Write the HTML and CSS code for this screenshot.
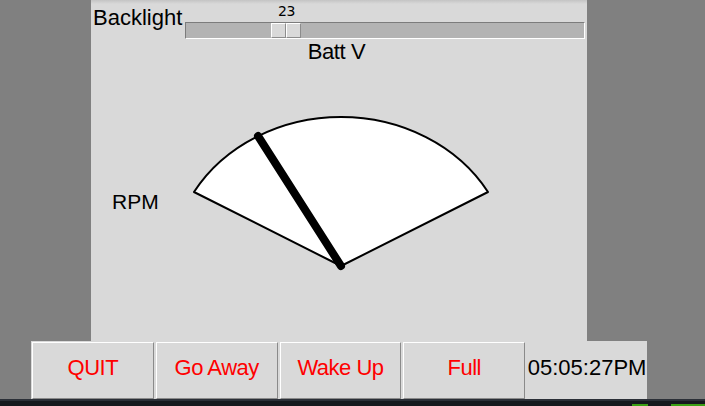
FILE: index.html
```html
<!DOCTYPE html>
<html lang="en">
<head>
  <meta charset="UTF-8" />
  <meta name="viewport" content="width=device-width, initial-scale=1.0" />
  <title>Dash</title>
  <link rel="stylesheet" href="styles.css">
</head>
<body>
  <div class="panel">
    <div class="top-row">
      <div class="backlight-label">Backlight</div>
      <div class="scale">
        <div class="scale-value" style="margin-left: 93px">23</div>
        <div class="trough">
          <div class="handle" style="margin-left: 85px"><span></span><span></span></div>
        </div>
      </div>
    </div>
    <div class="batt-label">Batt V</div>
    <div class="gauge-row">
      <div class="rpm-label">RPM</div>
      <svg class="gauge" width="320" height="170" viewBox="0 0 320 170">
        <path d="M161 156 L14 82 A169.4 149 0 0 1 308 82 Z" fill="#fff" stroke="#000" stroke-width="2" stroke-linejoin="round" />
        <line x1="161" y1="156" x2="78" y2="26" stroke="#000" stroke-width="8" stroke-linecap="round" />
      </svg>
    </div>
  </div>

  <div class="button-bar">
    <button class="btn">QUIT</button>
    <button class="btn">Go Away</button>
    <button class="btn">Wake Up</button>
    <button class="btn">Full</button>
    <div class="clock">05:05:27PM</div>
  </div>

  <div class="taskbar">
    <span class="tb-green small"></span>
    <span class="tb-green large"></span>
  </div>
</body>
</html>
```

FILE: styles.css
```css
body {
  margin: 0;
  padding: 0;
  background-color: #808080;
  font-family: "Liberation Sans", Arial, sans-serif;
  color: #000;
  overflow: hidden;
}
.panel {
  width: 496px;
  height: 341px;
  margin-left: 91px;
  background: linear-gradient(#c4c4c4, #d9d9d9 4px);
}
.top-row {
  display: flex;
  height: 40px;
}
.backlight-label {
  width: 92px;
  margin: 5px 0 0 2px;
  font-size: 22px;
  line-height: 25px;
}
.scale {
  width: 400px;
  padding-top: 4px;
}
.scale-value {
  font-family: "DejaVu Sans", sans-serif;
  font-size: 14px;
  line-height: 15px;
  letter-spacing: -0.3px;
}
.trough {
  display: flex;
  box-sizing: border-box;
  height: 17px;
  margin-top: 3px;
  background-color: #b3b3b3;
  border: 1px solid;
  border-color: #7c7c7c #fff #fff #7c7c7c;
}
.handle {
  display: flex;
}
.handle span {
  box-sizing: border-box;
  width: 15px;
  height: 15px;
  background-color: #d9d9d9;
  border: 1px solid;
  border-color: #fff #8c8c8c #8c8c8c #fff;
}
.batt-label {
  height: 25px;
  padding-right: 5px;
  font-size: 22px;
  line-height: 24px;
  letter-spacing: -0.4px;
  text-align: center;
}
.gauge-row {
  display: flex;
  margin-top: 45px;
}
.rpm-label {
  width: 68px;
  margin: 79px 0 0 21px;
  font-size: 21px;
  line-height: 25px;
}
.gauge {
  display: block;
}
.button-bar {
  display: flex;
  gap: 2px;
  box-sizing: border-box;
  width: 616px;
  height: 58px;
  margin-left: 31px;
  padding: 1px 0 0 1px;
  background-color: #d9d9d9;
}
.btn {
  box-sizing: border-box;
  width: 122px;
  height: 57px;
  padding: 0 0 6px;
  margin: 0;
  background-color: #d9d9d9;
  border: 1px solid;
  border-color: #fff #8a8a8a #8a8a8a #fff;
  color: #ff0000;
  font-family: "Liberation Sans", Arial, sans-serif;
  font-size: 22px;
  line-height: 24px;
  letter-spacing: -0.5px;
}
.clock {
  width: 120px;
  padding-top: 13px;
  font-size: 22px;
  line-height: 25px;
  text-align: center;
}
.taskbar {
  display: flex;
  align-items: flex-end;
  justify-content: flex-end;
  box-sizing: border-box;
  height: 7px;
  background-color: #15181d;
  border-top: 2px solid #2b2f37;
}
.tb-green {
  height: 2px;
  background-color: #3c9f14;
}
.tb-green.small {
  width: 16px;
  margin-right: 23px;
}
.tb-green.large {
  width: 34px;
}
```
